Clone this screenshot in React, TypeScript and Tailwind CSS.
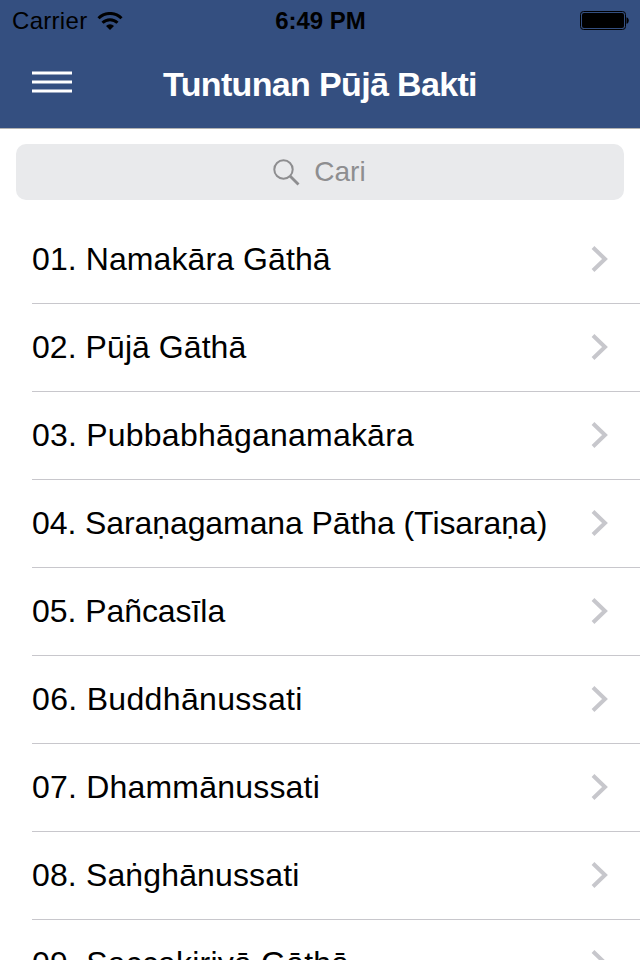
import { clsx } from 'clsx'

interface Chant {
    label: string
    tracking: string
}

const chants: Chant[] = [
    { label: '01. Namakāra Gāthā', tracking: 'tracking-[0.09px]' },
    { label: '02. Pūjā Gāthā', tracking: 'tracking-[0.06px]' },
    { label: '03. Pubbabhāganamakāra', tracking: 'tracking-[0.22px]' },
    { label: '04. Saraṇagamana Pātha (Tisaraṇa)', tracking: 'tracking-[-0.09px]' },
    { label: '05. Pañcasīla', tracking: 'tracking-[-0.06px]' },
    { label: '06. Buddhānussati', tracking: 'tracking-[0.33px]' },
    { label: '07. Dhammānussati', tracking: 'tracking-[0.2px]' },
    { label: '08. Saṅghānussati', tracking: 'tracking-[0.14px]' },
    { label: '09. Saccakiriyā Gāthā', tracking: 'tracking-[0.2px]' }
]

function WifiIcon() {
    return (
        <svg width="26" height="18" viewBox="0 0 26 18" fill="none" stroke="#000" strokeWidth="3">
            <path d="M1.5 6.2a16.3 16.3 0 0 1 23 0" />
            <path d="M5.5 10.8a10.6 10.6 0 0 1 15 0" />
            <path d="M13 17.9l-4-4a5.6 5.6 0 0 1 8 0z" fill="#000" stroke="none" />
        </svg>
    )
}

function MenuIcon() {
    return (
        <svg className="-mt-1" width="40" height="22" viewBox="0 0 40 22" stroke="#fff" strokeWidth="3">
            <path d="M0 2h40M0 11h40M0 20h40" />
        </svg>
    )
}

function StatusBar() {
    return (
        <div className="grid h-10 grid-cols-3 items-center pl-3 pr-[11px] pt-0.5 text-[24px] leading-[38px] text-black">
            <div className="flex items-center gap-[10px]">
                <span className="tracking-[0.3px]">Carrier</span>
                <WifiIcon />
            </div>
            <span className="text-center font-bold">6:49 PM</span>
            <svg className="justify-self-end" width="49" height="20" viewBox="0 0 49 20">
                <rect x="0.5" y="0.5" width="45" height="18" rx="3" fill="none" stroke="#000" />
                <rect x="2" y="2" width="42" height="15" rx="2" />
                <path d="M46.5 6.2c3 .5 3 6.1 0 6.6z" />
            </svg>
        </div>
    )
}

function ChantRow({ label, tracking }: Chant) {
    return (
        <li className="ml-8 flex h-22 items-center justify-between border-b border-[#c8c7cc] pb-px pr-8">
            <span className={clsx('whitespace-nowrap text-[32px] leading-10', tracking)}>{label}</span>
            <svg width="17" height="26" viewBox="0 0 17 26" fill="none" stroke="#c7c7cc" strokeWidth="4">
                <path d="M2 1.5 14 13 2 24.5" />
            </svg>
        </li>
    )
}

export default function App() {
    return (
        <div className="h-[960px] w-[640px] overflow-hidden bg-white font-['Liberation_Sans',sans-serif] text-black">
            <header className="h-[129px] border-b border-[#b2b2b2] bg-[#344f80]">
                <StatusBar />
                <div className="grid h-22 grid-cols-[1fr_auto_1fr] items-center px-8">
                    <MenuIcon />
                    <h1 className="text-[34px] font-bold tracking-[-0.65px] text-white">Tuntunan Pūjā Bakti</h1>
                </div>
            </header>
            <div className="px-4 pb-4 pt-[15px]">
                <div className="flex h-14 items-center justify-center gap-[14px] rounded-[10px] bg-[#e9eaec] pr-px text-[28px] text-[#8e8e90]">
                    <svg width="27" height="27" viewBox="0 0 27 27" fill="none" stroke="currentColor" strokeWidth="2">
                        <circle cx="10.5" cy="10.5" r="9.2" />
                        <path d="m17 17 8.5 8.5" strokeWidth="2.8" />
                    </svg>
                    <span>Cari</span>
                </div>
            </div>
            <ul>
                {chants.map((chant) => (
                    <ChantRow key={chant.label} {...chant} />
                ))}
            </ul>
        </div>
    )
}
